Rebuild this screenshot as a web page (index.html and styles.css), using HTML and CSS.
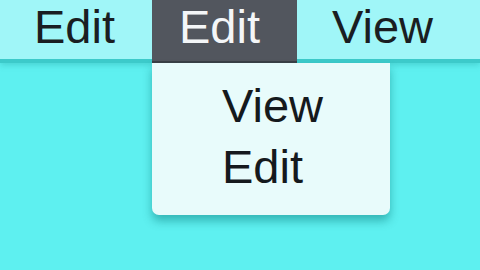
FILE: index.html
```html
<!DOCTYPE html>
<html>
<head>
<meta charset="utf-8">
<link rel="stylesheet" href="styles.css">
</head>
<body>
<div class="bar">
  <div class="item first">Edit</div>
  <div class="item active">Edit
    <div class="menu">
      <div class="entry">View</div>
      <div class="entry">Edit</div>
    </div>
  </div>
  <div class="item last">View</div>
</div>
</body>
</html>
```
FILE: styles.css
```css
html, body {
  margin: 0;
  padding: 0;
  width: 480px;
  height: 270px;
  overflow: hidden;
  background: #5ef0f0;
  font-family: "Liberation Sans", Arial, sans-serif;
}
.bar {
  display: flex;
  height: 59px;
  background: #a0f6f8;
  border-bottom: 4px solid #3ccaca;
  box-shadow: 0 2px 6px rgba(0, 120, 120, 0.25);
}
.item {
  font-size: 47px;
  line-height: 53px;
  color: #1a1e22;
  position: relative;
}
.first {
  width: 152px;
  padding-left: 34px;
  box-sizing: border-box;
}
.active {
  width: 145px;
  height: 63px;
  box-sizing: border-box;
  padding-left: 27px;
  background: #52565e;
  color: #f4f6f8;
  border-bottom: 2px solid #3a3e44;
}
.last {
  padding-left: 35px;
}
.menu {
  position: absolute;
  top: 63px;
  left: 0;
  width: 238px;
  height: 152px;
  background: #e8fbfb;
  border-radius: 0 0 7px 7px;
  box-shadow: 0 6px 10px rgba(0, 110, 110, 0.45);
  box-sizing: border-box;
  padding-top: 12px;
  padding-left: 70px;
  color: #15191d;
}
.entry {
  font-size: 47px;
  line-height: 61px;
}
```
